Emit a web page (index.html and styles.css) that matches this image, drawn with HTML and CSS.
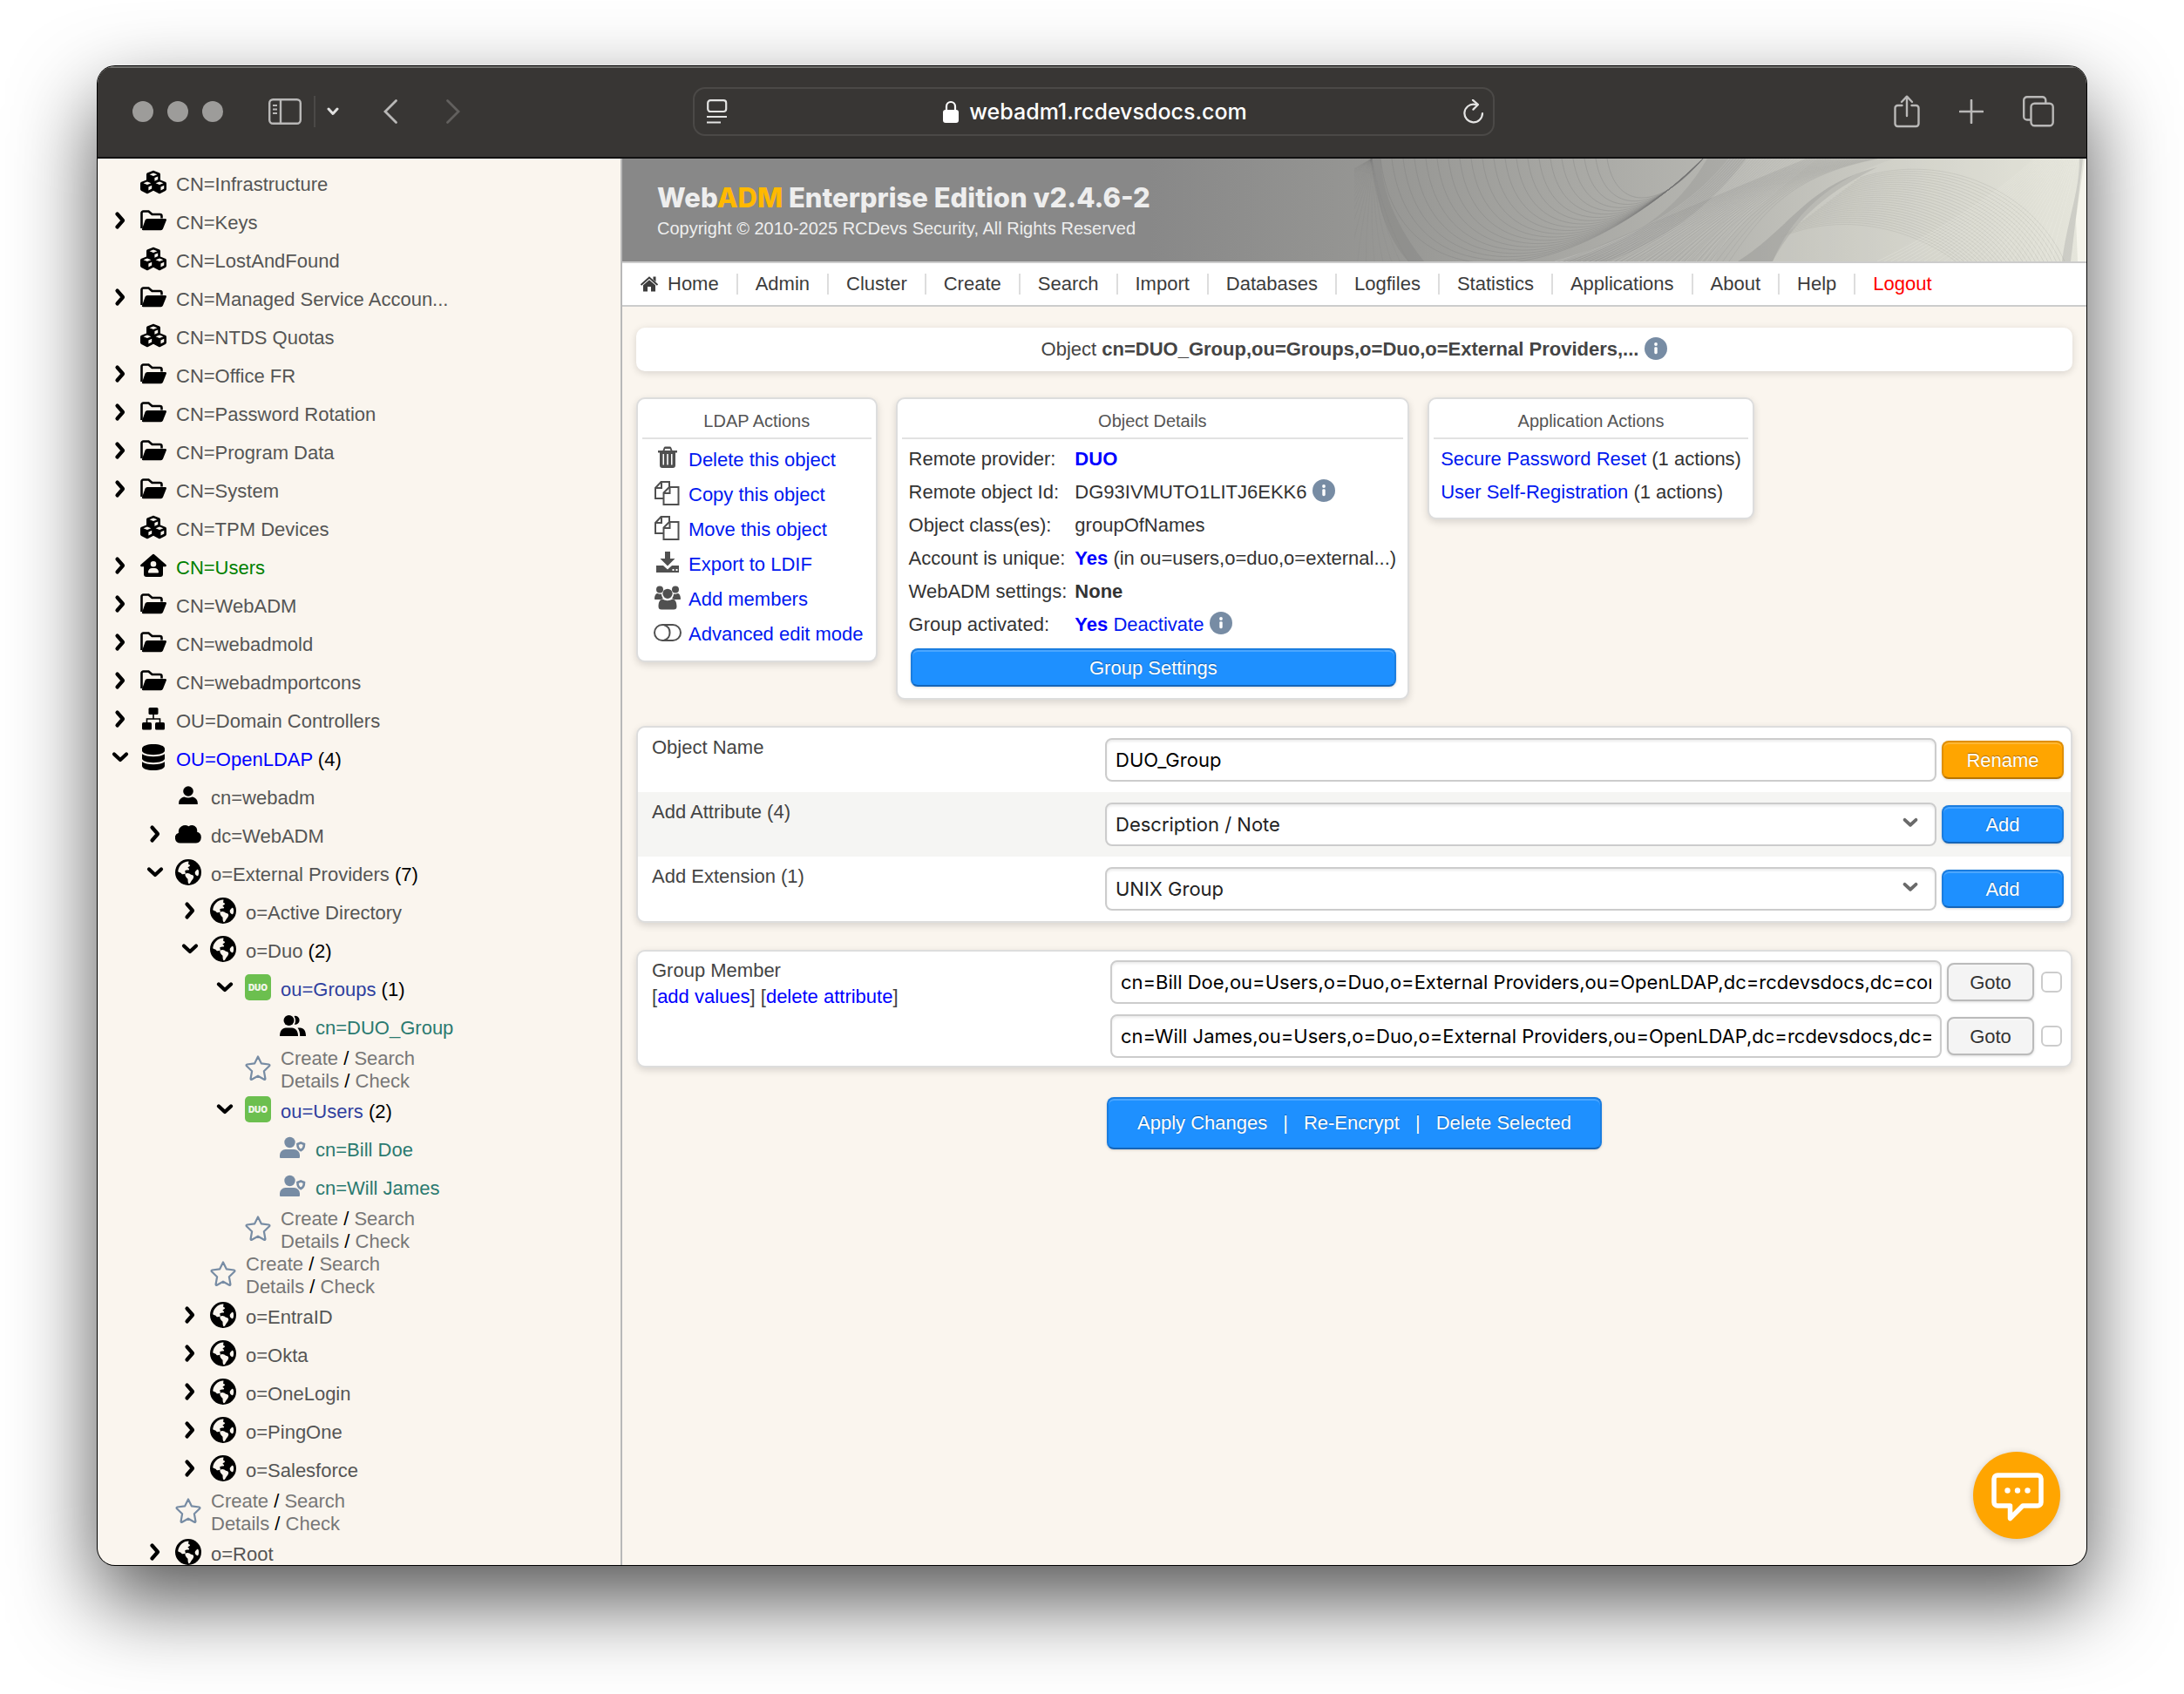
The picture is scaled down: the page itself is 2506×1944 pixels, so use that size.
FILE: index.html
```html
<!DOCTYPE html>
<html lang="en">
<head>
<meta charset="utf-8">
<title>WebADM Enterprise Edition</title>
<link rel="stylesheet" href="styles.css">
</head>
<body>
<svg class="sprite" aria-hidden="true">
  <symbol id="i-right" viewBox="0 0 24 24"><path d="M8.500 4.500L15 12l-6.500 7.500" fill="none" stroke="currentColor" stroke-width="4.200" stroke-linecap="round" stroke-linejoin="round"/></symbol>
  <symbol id="i-down" viewBox="0 0 24 24"><path d="M5 8.500l7 6.500 7-6.500" fill="none" stroke="currentColor" stroke-width="4.200" stroke-linecap="round" stroke-linejoin="round"/></symbol>
  <symbol id="i-cubes" viewBox="0 0 512 512"><path fill="currentColor" d="M488.600 250.200L392 214V105.500c0-15-9.300-28.400-23.400-33.700l-100-37.500c-8.100-3.100-17.100-3.100-25.300 0l-100 37.500c-14.100 5.300-23.400 18.700-23.400 33.700V214l-96.600 36.200C9.300 255.500 0 268.900 0 283.900V394c0 13.600 7.700 26.100 19.900 32.200l100 50c10.100 5.100 22.100 5.100 32.200 0l103.900-52 103.900 52c10.100 5.100 22.100 5.100 32.200 0l100-50c12.200-6.100 19.900-18.600 19.900-32.200V283.900c0-15-9.300-28.400-23.400-33.700zM345 205l-65 28v-62l65-28v62zM180 106l76-29 76 29v.6l-76 29-76-29v-.6zM225 385l-65 34v-68l65-30v64zm-13-108l-76 29-76-29v-.6l76-29 76 29v.6zm253 108l-65 34v-68l65-30v64zm-13-108l-76 29-76-29v-.6l76-29 76 29v.6z"/></symbol>
  <symbol id="i-folder" viewBox="0 0 30 30"><path d="M1.500 24V6.500a2 2 0 0 1 2-2h6l4 3.500h9a2 2 0 0 1 2 2v2.500" fill="none" stroke="currentColor" stroke-width="2.600"/><path fill="currentColor" d="M8 13h20.500a1.400 1.400 0 0 1 1.300 1.900l-3.800 9.700a2.600 2.600 0 0 1-2.400 1.600H3.300a1.300 1.300 0 0 1-1.200-1.800l3.500-9.800A2.600 2.600 0 0 1 8 13z"/></symbol>
  <symbol id="i-houseuser" viewBox="0 0 30 30"><path fill="currentColor" fill-rule="evenodd" d="M14 2.200a1.500 1.500 0 0 1 2 0L29.500 14c.9.900.3 2.200-.9 2.200H26V25a3 3 0 0 1-3 3H7a3 3 0 0 1-3-3v-8.800H1.400C.2 16.200-.4 14.900.5 14zM15 10a3.300 3.300 0 1 0 0 6.600A3.300 3.300 0 0 0 15 10zm-1.500 8A4.500 4.500 0 0 0 9 22.500c0 .6.400 1 1 1h10c.6 0 1-.4 1-1a4.500 4.500 0 0 0-4.500-4.500z"/></symbol>
  <symbol id="i-sitemap" viewBox="0 0 30 30"><g fill="currentColor"><rect x="9.500" y="2" width="11" height="8" rx="1.500"/><rect x="2" y="19" width="11" height="8.500" rx="1.500"/><rect x="17" y="19" width="11" height="8.500" rx="1.500"/></g><path d="M15 10v5M7.500 19v-4h15v4" fill="none" stroke="currentColor" stroke-width="1.600"/></symbol>
  <symbol id="i-db" viewBox="0 0 30 30"><path fill="currentColor" d="M15 0c7 0 13 2 13 5v2.500c0 2.700-6 4.700-13 4.700S2 10.200 2 7.500V5c0-3 6-5 13-5zM2 11.300c2.600 1.900 7.600 2.900 13 2.900s10.400-1 13-2.900v5.200c0 2.700-6 4.700-13 4.700s-13-2-13-4.700zM2 20.300c2.600 1.900 7.600 2.900 13 2.900s10.400-1 13-2.900V25c0 3-6 5-13 5S2 28 2 25z"/></symbol>
  <symbol id="i-user" viewBox="0 0 30 30"><g fill="currentColor"><circle cx="15" cy="10" r="5.800"/><path d="M4.200 25v-1.500C4.200 19.500 7 17 10.500 16.500q4.500 2 9 0c3.500.5 6.300 3 6.300 7V25z"/></g></symbol>
  <symbol id="i-cloud" viewBox="0 0 30 30"><path fill="currentColor" d="M6 25.500A6 6 0 0 1 4 13.800 7.500 7.500 0 0 1 15.500 6.300 6 6 0 0 1 25 12.600 6.600 6.600 0 0 1 24 25.500z"/></symbol>
  <symbol id="i-globe" viewBox="0 0 30 30"><circle cx="15" cy="15" r="15" fill="currentColor"/><g fill="#faf5ee"><path d="M15.500 2.600C9 2.600 4 7.600 3.200 14.200c2 1.300 3.800 1.200 4.300 2.800 1.300.7 3 .2 4.500-.4l-.8-3.200c1-1.200 3.200-.6 4.800-1.200.5-1.200-.4-1.900-1.600-2.300.6-1.600 2.400-1.300 2.700-2.900-.5-1-1.700-.7-2-1.600z"/><path d="M11.500 16.800c2.500-1.400 5-.6 6.500 1 2 .4 3.400 1 3.200 2.700-.5 2.500-2.400 3.500-3.200 5.500-.6 1.300-1.200 2.300-2.300 2.200-1.300-1-1-3.200-1.200-5.500-1.600-1.400-3.600-3.500-3-5.900z"/><path d="M25 12c1-.8 2 .2 2.100 3 0 2.500-.6 4.600-1.700 4.300-1.800-.7-2.800-2.300-2.700-4 .2-1.500 1.600-2 2.300-3.300z"/></g></symbol>
  <symbol id="i-users" viewBox="0 0 30 30"><g fill="currentColor"><circle cx="10.500" cy="9" r="6"/><path d="M0 27c0-6 3-9.500 7-9.500h7c4 0 7 3.500 7 9.500z"/><path d="M16.500 3.900a5 5 0 1 1 .3 9.800c1.700-2.700 1.700-6.800-.3-9.800zM20.500 17.500h3c4 0 6.500 3.500 6.500 9.500h-6.800c0-4-.8-7-2.700-9.500z"/></g></symbol>
  <symbol id="i-usershield" viewBox="0 0 30 30"><g fill="currentColor"><circle cx="11.500" cy="9" r="6.200"/><path d="M0 26v-2.500a6.500 6.500 0 0 1 6.500-6.500h10a6.500 6.500 0 0 1 6.500 6.500V26a1 1 0 0 1-1 1H1a1 1 0 0 1-1-1z"/></g><path d="M24.200 9.500l3.800 1.500c0 3.400-1.400 6-3.800 7.200-2.400-1.200-3.800-3.800-3.800-7.200z" fill="none" stroke="currentColor" stroke-width="2.600"/></symbol>
  <symbol id="i-star" viewBox="0 0 30 30"><path d="M15 2.400l3.800 7.900 8.700 1.200c.9.200 1.200 1 .6 1.700l-6.200 6 1.500 8.600c.1.900-.7 1.300-1.300 1L15 24.700l-7.100 4.100c-.6.300-1.400-.1-1.300-1l1.500-8.600-6.200-6c-.6-.7-.3-1.500.6-1.700l8.700-1.200z" fill="none" stroke="currentColor" stroke-width="2.200" stroke-linejoin="round"/></symbol>
  <symbol id="i-info" viewBox="0 0 26 26"><circle cx="13" cy="13" r="13" fill="#778ca4"/><circle cx="13" cy="8" r="1.900" fill="#fff"/><rect x="11.300" y="11.200" width="3.400" height="8" rx="1.400" fill="#fff"/></symbol>
  <symbol id="i-home" viewBox="0 0 22 20"><path d="M1.500 11L11 2.500l9.500 8.500" fill="none" stroke="currentColor" stroke-width="2"/><path fill="currentColor" d="M15.500 1.500h3v6l-3-2.800zM4 11.200l7-6 7 6V18.500h-5V13H9v5.500H4z"/></symbol>
  <symbol id="i-trash" viewBox="0 0 32 28"><path fill="currentColor" fill-rule="evenodd" d="M5 5h5.500l1.200-3.200A2 2 0 0 1 13.500.5h5a2 2 0 0 1 1.800 1.300L21.500 5H27v2.500h-2V22a3 3 0 0 1-3 3H10a3 3 0 0 1-3-3V7.500H5zm7.500 0h7l-.8-2h-5.400zM10.500 9v12.500H12V9zm4.700 0v12.500h1.600V9zM20 9v12.500h1.500V9z"/></symbol>
  <symbol id="i-copy" viewBox="0 0 32 28"><g fill="none" stroke="currentColor" stroke-width="2"><path d="M11.500 20H2V8l6.500-7H18v6M9 1.500V8H2.500M11.500 13.500L18 7h10.500v20h-17z"/><path d="M18.500 7.500V14H12"/></g></symbol>
  <symbol id="i-export" viewBox="0 0 32 28"><path fill="currentColor" fill-rule="evenodd" d="M13 1h6v8h5.500L16 17.500 7.500 9H13zM3 17h8l5 4.500 5-4.500h8v8H3zm18.500 4v2h2v-2zm4 0v2h2v-2z"/></symbol>
  <symbol id="i-group" viewBox="0 0 32 28"><g fill="currentColor"><circle cx="7" cy="4.500" r="4"/><circle cx="25" cy="4.500" r="4"/><circle cx="16" cy="9.300" r="5.600"/><path d="M1 15.500C1 11.500 2.500 9 4.500 9c1.500.8 3 .9 4.500.4.200 2 .6 3.500 1.800 5L8.500 16H3a2 2 0 0 1-2-.5zM31 15.500c0-4-1.500-6.500-3.500-6.500-1.500.8-3 .9-4.500.4-.2 2-.6 3.500-1.800 5l2.300 1.600H29a2 2 0 0 0 2-.5zM5.500 24c0-5 1.800-8.500 5-8.500 3.400 2.200 7.600 2.200 11 0 3.200 0 5 3.500 5 8.500a3.500 3.500 0 0 1-3.500 3.500H9A3.500 3.500 0 0 1 5.500 24z"/></g></symbol>
  <symbol id="i-toggle" viewBox="0 0 32 28"><g fill="none" stroke="currentColor" stroke-width="2"><rect x="1" y="5" width="30" height="18" rx="9"/><path d="M12 5.200a9.200 9.200 0 0 1 0 17.600"/></g></symbol>
</svg>

<div class="window">
  <header class="toolbar">
    <div class="toolbar-left">
      <span class="lights"><i></i><i></i><i></i></span>
      <button class="tool tool-sidebar" aria-label="Sidebar"><svg width="38" height="30" viewBox="0 0 38 30"><g fill="none" stroke="currentColor" stroke-width="2.400"><rect x="1.200" y="1.200" width="35.600" height="27.600" rx="4"/><path d="M14 1v28"/></g><path d="M5 8h5M5 12.500h5M5 17h5" stroke="currentColor" stroke-width="1.800"/></svg></button>
      <span class="tool-sep"></span>
      <button class="tool tool-menu" aria-label="Tab groups"><svg width="14" height="10" viewBox="0 0 14 10"><path d="M2 2l5 5.500L12 2" fill="none" stroke="currentColor" stroke-width="3" stroke-linecap="round" stroke-linejoin="round"/></svg></button>
      <button class="tool tool-back" aria-label="Back"><svg width="18" height="30" viewBox="0 0 18 30"><path d="M15.500 2.500L3 15l12.500 12.500" fill="none" stroke="currentColor" stroke-width="2.800" stroke-linecap="round"/></svg></button>
      <button class="tool tool-forward" aria-label="Forward"><svg width="18" height="30" viewBox="0 0 18 30"><path d="M2.500 2.500L15 15 2.500 27.500" fill="none" stroke="currentColor" stroke-width="2.800" stroke-linecap="round"/></svg></button>
    </div>
    <div class="address">
      <svg width="24" height="28" viewBox="0 0 24 28"><rect x="1.200" y="1.200" width="21" height="12.800" rx="3" fill="none" stroke="currentColor" stroke-width="2.200"/><path d="M0 20h23M0 26.500h16" stroke="currentColor" stroke-width="2.200"/></svg>
      <span class="address-text"><svg width="18" height="26" viewBox="0 0 18 26"><rect y="11" width="18" height="15" rx="3" fill="currentColor"/><path d="M4 12V7a5 5 0 0 1 10 0v5" fill="none" stroke="currentColor" stroke-width="2.200"/></svg>webadm1.rcdevsdocs.com</span>
      <button class="tool tool-reload" aria-label="Reload"><svg width="24" height="28" viewBox="0 0 24 28"><path d="M22 16a10.300 10.300 0 1 1-9-10.200h3.500M11 .8l6 5.200-5.600 5.600" fill="none" stroke="currentColor" stroke-width="2.200" stroke-linecap="round" stroke-linejoin="round"/></svg></button>
    </div>
    <div class="toolbar-right">
      <button class="tool" aria-label="Share"><svg width="30" height="38" viewBox="0 0 30 38"><path d="M9.500 12H4.500a3 3 0 0 0-3 3v18a3 3 0 0 0 3 3h21a3 3 0 0 0 3-3V15a3 3 0 0 0-3-3h-5M15 24V2M9 8l6-6.300L21 8" fill="none" stroke="currentColor" stroke-width="2.400" stroke-linecap="round" stroke-linejoin="round"/></svg></button>
      <button class="tool" aria-label="New tab"><svg width="28" height="28" viewBox="0 0 28 28"><path d="M14 1v26M1 14h26" fill="none" stroke="currentColor" stroke-width="2.600" stroke-linecap="round"/></svg></button>
      <button class="tool" aria-label="Tab overview"><svg width="36" height="36" viewBox="0 0 36 36"><g fill="none" stroke="currentColor" stroke-width="2.400"><path d="M9.500 27.500H5a3.800 3.800 0 0 1-3.800-3.800V5A3.800 3.800 0 0 1 5 1.200h17.500A3.800 3.800 0 0 1 26.300 5v3.500"/><rect x="9.500" y="8.700" width="25.200" height="25.600" rx="4"/></g></svg></button>
    </div>
  </header>

  <div class="frames">
    <nav class="sidebar" aria-label="Directory tree">
      <ul class="tree" id="tree">
        <li><div class="node"><span class="toggle"></span><svg class="icon"><use href="#i-cubes"/></svg><a href="#">CN=Infrastructure</a></div></li>
        <li><div class="node"><svg class="toggle"><use href="#i-right"/></svg><svg class="icon"><use href="#i-folder"/></svg><a href="#">CN=Keys</a></div></li>
        <li><div class="node"><span class="toggle"></span><svg class="icon"><use href="#i-cubes"/></svg><a href="#">CN=LostAndFound</a></div></li>
        <li><div class="node"><svg class="toggle"><use href="#i-right"/></svg><svg class="icon"><use href="#i-folder"/></svg><a href="#">CN=Managed Service Accoun...</a></div></li>
        <li><div class="node"><span class="toggle"></span><svg class="icon"><use href="#i-cubes"/></svg><a href="#">CN=NTDS Quotas</a></div></li>
        <li><div class="node"><svg class="toggle"><use href="#i-right"/></svg><svg class="icon"><use href="#i-folder"/></svg><a href="#">CN=Office FR</a></div></li>
        <li><div class="node"><svg class="toggle"><use href="#i-right"/></svg><svg class="icon"><use href="#i-folder"/></svg><a href="#">CN=Password Rotation</a></div></li>
        <li><div class="node"><svg class="toggle"><use href="#i-right"/></svg><svg class="icon"><use href="#i-folder"/></svg><a href="#">CN=Program Data</a></div></li>
        <li><div class="node"><svg class="toggle"><use href="#i-right"/></svg><svg class="icon"><use href="#i-folder"/></svg><a href="#">CN=System</a></div></li>
        <li><div class="node"><span class="toggle"></span><svg class="icon"><use href="#i-cubes"/></svg><a href="#">CN=TPM Devices</a></div></li>
        <li><div class="node"><svg class="toggle"><use href="#i-right"/></svg><svg class="icon"><use href="#i-houseuser"/></svg><a class="green" href="#">CN=Users</a></div></li>
        <li><div class="node"><svg class="toggle"><use href="#i-right"/></svg><svg class="icon"><use href="#i-folder"/></svg><a href="#">CN=WebADM</a></div></li>
        <li><div class="node"><svg class="toggle"><use href="#i-right"/></svg><svg class="icon"><use href="#i-folder"/></svg><a href="#">CN=webadmold</a></div></li>
        <li><div class="node"><svg class="toggle"><use href="#i-right"/></svg><svg class="icon"><use href="#i-folder"/></svg><a href="#">CN=webadmportcons</a></div></li>
        <li><div class="node"><svg class="toggle"><use href="#i-right"/></svg><svg class="icon"><use href="#i-sitemap"/></svg><a href="#">OU=Domain Controllers</a></div></li>
        <li><div class="node"><svg class="toggle"><use href="#i-down"/></svg><svg class="icon"><use href="#i-db"/></svg><span><a class="blue" href="#">OU=OpenLDAP</a> (4)</span></div>
          <ul>
            <li><div class="node"><span class="toggle"></span><svg class="icon"><use href="#i-user"/></svg><a href="#">cn=webadm</a></div></li>
            <li><div class="node"><svg class="toggle"><use href="#i-right"/></svg><svg class="icon"><use href="#i-cloud"/></svg><a href="#">dc=WebADM</a></div></li>
            <li><div class="node"><svg class="toggle"><use href="#i-down"/></svg><svg class="icon"><use href="#i-globe"/></svg><span><a href="#">o=External Providers</a> (7)</span></div>
              <ul>
                <li><div class="node"><svg class="toggle"><use href="#i-right"/></svg><svg class="icon"><use href="#i-globe"/></svg><a href="#">o=Active Directory</a></div></li>
                <li><div class="node"><svg class="toggle"><use href="#i-down"/></svg><svg class="icon"><use href="#i-globe"/></svg><span><a href="#">o=Duo</a> (2)</span></div>
                  <ul>
                    <li><div class="node"><svg class="toggle"><use href="#i-down"/></svg><span class="icon duo">DUO</span><span><a class="navy" href="#">ou=Groups</a> (1)</span></div>
                      <ul>
                        <li><div class="node"><span class="toggle"></span><svg class="icon"><use href="#i-users"/></svg><a class="teal" href="#">cn=DUO_Group</a></div></li>
                      </ul>
                      <div class="node node-actions"><span class="toggle"></span><svg class="icon"><use href="#i-star"/></svg><span><a href="#">Create</a> / <a href="#">Search</a><br><a href="#">Details</a> / <a href="#">Check</a></span></div>
                    </li>
                    <li><div class="node"><svg class="toggle"><use href="#i-down"/></svg><span class="icon duo">DUO</span><span><a class="navy" href="#">ou=Users</a> (2)</span></div>
                      <ul>
                        <li><div class="node"><span class="toggle"></span><svg class="icon slate"><use href="#i-usershield"/></svg><a class="teal" href="#">cn=Bill Doe</a></div></li>
                        <li><div class="node"><span class="toggle"></span><svg class="icon slate"><use href="#i-usershield"/></svg><a class="teal" href="#">cn=Will James</a></div></li>
                      </ul>
                      <div class="node node-actions"><span class="toggle"></span><svg class="icon"><use href="#i-star"/></svg><span><a href="#">Create</a> / <a href="#">Search</a><br><a href="#">Details</a> / <a href="#">Check</a></span></div>
                    </li>
                  </ul>
                  <div class="node node-actions"><span class="toggle"></span><svg class="icon"><use href="#i-star"/></svg><span><a href="#">Create</a> / <a href="#">Search</a><br><a href="#">Details</a> / <a href="#">Check</a></span></div>
                </li>
                <li><div class="node"><svg class="toggle"><use href="#i-right"/></svg><svg class="icon"><use href="#i-globe"/></svg><a href="#">o=EntraID</a></div></li>
                <li><div class="node"><svg class="toggle"><use href="#i-right"/></svg><svg class="icon"><use href="#i-globe"/></svg><a href="#">o=Okta</a></div></li>
                <li><div class="node"><svg class="toggle"><use href="#i-right"/></svg><svg class="icon"><use href="#i-globe"/></svg><a href="#">o=OneLogin</a></div></li>
                <li><div class="node"><svg class="toggle"><use href="#i-right"/></svg><svg class="icon"><use href="#i-globe"/></svg><a href="#">o=PingOne</a></div></li>
                <li><div class="node"><svg class="toggle"><use href="#i-right"/></svg><svg class="icon"><use href="#i-globe"/></svg><a href="#">o=Salesforce</a></div></li>
              </ul>
              <div class="node node-actions"><span class="toggle"></span><svg class="icon"><use href="#i-star"/></svg><span><a href="#">Create</a> / <a href="#">Search</a><br><a href="#">Details</a> / <a href="#">Check</a></span></div>
            </li>
            <li><div class="node"><svg class="toggle"><use href="#i-right"/></svg><svg class="icon"><use href="#i-globe"/></svg><a href="#">o=Root</a></div></li>
          </ul>
        </li>
      </ul>
    </nav>

    <main class="main">
      <div class="banner">
        <svg class="waves" id="waves" viewBox="0 0 840 118" preserveAspectRatio="xMaxYMid slice" aria-hidden="true"></svg>
        <h1>Web<b>ADM</b> Enterprise Edition v2.4.6-2</h1>
        <p>Copyright © 2010-2025 RCDevs Security, All Rights Reserved</p>
      </div>
      <nav class="menu">
        <a href="#"><svg width="22" height="20"><use href="#i-home"/></svg>Home</a>
        <a href="#">Admin</a>
        <a href="#">Cluster</a>
        <a href="#">Create</a>
        <a href="#">Search</a>
        <a href="#">Import</a>
        <a href="#">Databases</a>
        <a href="#">Logfiles</a>
        <a href="#">Statistics</a>
        <a href="#">Applications</a>
        <a href="#">About</a>
        <a href="#">Help</a>
        <a class="logout" href="#">Logout</a>
      </nav>

      <div class="content">
        <h2 class="object-bar"><span>Object <b>cn=DUO_Group,ou=Groups,o=Duo,o=External Providers,...</b></span><svg class="info"><use href="#i-info"/></svg></h2>

        <div class="cards">
          <section class="card">
            <h3>LDAP Actions</h3>
            <ul class="actions">
              <li><svg><use href="#i-trash"/></svg><a href="#">Delete this object</a></li>
              <li><svg><use href="#i-copy"/></svg><a href="#">Copy this object</a></li>
              <li><svg><use href="#i-copy"/></svg><a href="#">Move this object</a></li>
              <li><svg><use href="#i-export"/></svg><a href="#">Export to LDIF</a></li>
              <li><svg><use href="#i-group"/></svg><a href="#">Add members</a></li>
              <li><svg><use href="#i-toggle"/></svg><a href="#">Advanced edit mode</a></li>
            </ul>
          </section>
          <section class="card">
            <h3>Object Details</h3>
            <table class="details">
              <tr><th scope="row">Remote provider:</th><td><b class="em">DUO</b></td></tr>
              <tr><th scope="row">Remote object Id:</th><td>DG93IVMUTO1LITJ6EKK6 <svg class="info"><use href="#i-info"/></svg></td></tr>
              <tr><th scope="row">Object class(es):</th><td>groupOfNames</td></tr>
              <tr><th scope="row">Account is unique:</th><td><b class="em">Yes</b> (in ou=users,o=duo,o=external...)</td></tr>
              <tr><th scope="row">WebADM settings:</th><td><b>None</b></td></tr>
              <tr><th scope="row">Group activated:</th><td><b class="em">Yes</b> <a href="#">Deactivate</a> <svg class="info"><use href="#i-info"/></svg></td></tr>
            </table>
            <button class="btn btn-settings" type="button">Group Settings</button>
          </section>
          <section class="card">
            <h3>Application Actions</h3>
            <ul class="apps">
              <li><a href="#">Secure Password Reset</a> (1 actions)</li>
              <li><a href="#">User Self-Registration</a> (1 actions)</li>
            </ul>
          </section>
        </div>

        <form>
          <div class="panel">
            <div class="row">
              <label for="name">Object Name</label>
              <div class="control"><input class="field" id="name" type="text" value="DUO_Group"><button class="btn btn-orange" type="button">Rename</button></div>
            </div>
            <div class="row row-alt">
              <label for="attr">Add Attribute (4)</label>
              <div class="control"><span class="select"><select class="field" id="attr"><option>Description / Note</option></select><svg><use href="#i-down"/></svg></span><button class="btn" type="button">Add</button></div>
            </div>
            <div class="row">
              <label for="ext">Add Extension (1)</label>
              <div class="control"><span class="select"><select class="field" id="ext"><option>UNIX Group</option></select><svg><use href="#i-down"/></svg></span><button class="btn" type="button">Add</button></div>
            </div>
          </div>

          <div class="panel">
            <div class="row row-members">
              <div class="members-label"><label for="m1">Group Member</label><br>[<a href="#">add values</a>] [<a href="#">delete attribute</a>]</div>
              <div class="members">
                <div class="control"><input class="field" id="m1" type="text" value="cn=Bill Doe,ou=Users,o=Duo,o=External Providers,ou=OpenLDAP,dc=rcdevsdocs,dc=com"><button class="btn btn-plain" type="button">Goto</button><input class="check" type="checkbox" aria-label="Select Bill Doe"></div>
                <div class="control"><input class="field" type="text" aria-label="Group member 2" value="cn=Will James,ou=Users,o=Duo,o=External Providers,ou=OpenLDAP,dc=rcdevsdocs,dc=com"><button class="btn btn-plain" type="button">Goto</button><input class="check" type="checkbox" aria-label="Select Will James"></div>
              </div>
            </div>
          </div>

          <div class="submit">
            <button type="button">Apply Changes</button><span>|</span><button type="button">Re-Encrypt</button><span>|</span><button type="button">Delete Selected</button>
          </div>
        </form>
      </div>
    </main>
  </div>
  <button class="chat" type="button" aria-label="Chat"><svg width="60" height="56" viewBox="0 0 60 56"><path d="M7 3h46a4 4 0 0 1 4 4v27a4 4 0 0 1-4 4H36L21.500 52.500V38H7a4 4 0 0 1-4-4V7a4 4 0 0 1 4-4z" fill="none" stroke="#fff" stroke-width="5.500" stroke-linejoin="round"/><g fill="#fff"><circle cx="18.500" cy="20.500" r="3.200"/><circle cx="30" cy="20.500" r="3.200"/><circle cx="41.500" cy="20.500" r="3.200"/></g></svg></button>
</div>
<script src="waves.js"></script>
</body>
</html>
```

FILE: styles.css
```css
* {
  box-sizing: border-box;
}

body {
  margin: 0;
  padding: 76px 112px 148px;
  background: #fff;
  color: #000;
  font: 22px/30px "Liberation Sans", Arial, sans-serif;
}

ul {
  margin: 0;
  padding: 0;
  list-style: none;
}

a {
  color: #0018f0;
  text-decoration: none;
}

button {
  font: inherit;
  cursor: pointer;
}

.sprite {
  position: absolute;
  width: 0;
  height: 0;
}

/* Browser window */
.window {
  position: relative;
  display: flex;
  flex-direction: column;
  height: calc(100vh - 224px);
  overflow: hidden;
  border-radius: 20px;
  background: #faf5ee;
  box-shadow: 0 0 0 1px #000, 0 40px 96px rgba(0, 0, 0, 0.68);
}

.toolbar {
  flex: none;
  display: flex;
  align-items: center;
  height: 106px;
  padding: 0 37px 2px 40px;
  border-top: 2px solid #72726f;
  border-bottom: 2px solid #111;
  background: #383634;
  color: #b9b8b7;
}

.toolbar-left,
.toolbar-right {
  flex: 1 1 0;
  display: flex;
  align-items: center;
}

.toolbar-right {
  justify-content: flex-end;
  gap: 45px;
}

.lights {
  display: flex;
  gap: 16px;
}

.lights i {
  width: 24px;
  height: 24px;
  border-radius: 50%;
  background: #9d9c9a;
}

.tool {
  display: flex;
  padding: 0;
  border: 0;
  background: none;
  color: inherit;
}

.tool-sidebar {
  margin-left: 52px;
}

.tool-sep {
  width: 2px;
  height: 36px;
  margin: 0 13px 0 14px;
  background: #4b4947;
}

.tool-menu {
  color: #e0e0df;
}

.tool-back {
  margin: 0 54px 0 50px;
}

.tool-forward {
  color: #62605e;
}

.address {
  flex: 0 1 920px;
  display: flex;
  align-items: center;
  justify-content: space-between;
  height: 56px;
  padding: 0 10px 0 14px;
  border: 2px solid #4b4947;
  border-radius: 14px;
  color: #e4e4e3;
}

.address-text {
  display: flex;
  align-items: center;
  gap: 12px;
  color: #fff;
  font: 500 25px/32px Inter, sans-serif;
}

.frames {
  flex: 1;
  display: flex;
  min-height: 0;
}

/* Directory tree */
.sidebar {
  flex: 0 0 602px;
  overflow: hidden;
  padding: 8px 0 0 14px;
  border-right: 2px solid #b8b8b8;
}

.tree ul {
  padding-left: 40px;
}

.node {
  display: flex;
  align-items: center;
  gap: 11px;
  height: 44px;
  white-space: nowrap;
}

.node a {
  color: #555;
}

.node svg,
.duo {
  margin-bottom: 6px;
}

.toggle {
  flex: none;
  width: 24px;
  height: 24px;
}

.icon {
  flex: none;
  width: 30px;
  height: 30px;
}

.duo {
  border-radius: 5px;
  background: #6cbf4f;
  color: #f1f6ea;
  font: 900 10px/30px Inter, sans-serif;
  text-align: center;
}

.node-actions {
  height: 52px;
  line-height: 26px;
}

.node-actions a {
  color: #777;
}

.node-actions .icon,
.slate {
  color: #778ca4;
}

.node .green {
  color: #008000;
}

.node .blue {
  color: #00f;
}

.node .navy {
  color: #2f3f9e;
}

.node .teal {
  color: #2b7a70;
}

/* Main frame */
.main {
  flex: 1;
  min-width: 0;
  overflow: hidden;
}

.banner {
  position: relative;
  height: 120px;
  padding: 26px 40px;
  border-bottom: 2px solid #ccc;
  background: linear-gradient(90deg, #888 36%, #999996 54%, #b6b6b1 75%, #deded4 96%, #e6e6dc);
  color: #eee;
}

.waves {
  position: absolute;
  top: 0;
  right: 0;
  width: 50%;
  height: 100%;
}

.banner h1 {
  margin: 0;
  font: 800 31px/38px Inter, sans-serif;
}

.banner h1 b {
  color: #ffb900;
  font-weight: inherit;
}

.banner p {
  margin: 0;
  font-size: 20px;
  line-height: 32px;
}

.menu {
  display: flex;
  align-items: center;
  height: 50px;
  border-bottom: 2px solid #ccc;
  background: #fff;
}

.menu a {
  display: flex;
  align-items: center;
  gap: 10px;
  padding: 0 20px;
  border-right: 2px solid #ddd;
  color: #3c3c3c;
  line-height: 24px;
}

.menu .logout {
  border: 0;
  color: #f00;
}

.content {
  padding: 24px 16px;
}

.object-bar {
  display: flex;
  align-items: center;
  justify-content: center;
  gap: 7px;
  height: 50px;
  margin: 0 0 30px;
  border-radius: 10px;
  background: #fff;
  box-shadow: 0 2px 8px rgba(0, 0, 0, 0.14);
  color: #444;
  font-size: 22px;
  font-weight: 400;
}

.object-bar .info {
  margin-bottom: 2px;
}

.info {
  width: 26px;
  height: 26px;
  vertical-align: -4px;
}

.cards {
  display: flex;
  align-items: flex-start;
  gap: 21px;
  margin-bottom: 30px;
}

.card,
.panel {
  border: 2px solid #ddd;
  border-radius: 10px;
  background: #fff;
  box-shadow: 0 3px 8px rgba(0, 0, 0, 0.14);
}

.card {
  padding: 0 5px 10px;
  color: #333;
}

.card h3 {
  margin: 0 0 4px;
  padding: 10px 0 4px;
  border-bottom: 2px solid #e2e2e2;
  color: #555;
  font-size: 20px;
  font-weight: 400;
  text-align: center;
}

.actions li {
  display: flex;
  align-items: center;
  gap: 8px;
  height: 40px;
  padding: 0 9px 0 13px;
}

.actions svg {
  width: 32px;
  height: 28px;
  margin-bottom: 4px;
  color: #505050;
}

.details {
  border-collapse: collapse;
}

.details th,
.details td {
  height: 38px;
  padding: 0 8px;
  font-weight: 400;
  text-align: left;
  white-space: nowrap;
}

.details th {
  padding-right: 1px;
}

.em {
  color: #00f;
}

.apps li {
  height: 38px;
  padding: 0 8px;
  line-height: 38px;
}

.btn {
  flex: none;
  width: 140px;
  height: 44px;
  padding: 2px 0 0;
  border: 2px solid #1a7de0;
  border-bottom-color: #1565b8;
  border-radius: 8px;
  background: #1e90ff;
  box-shadow: inset 0 2px 0 rgba(255, 255, 255, 0.2), 0 1px 3px rgba(0, 0, 0, 0.15);
  color: #fff;
  text-shadow: 0 -1px 1px rgba(0, 0, 0, 0.35);
}

.btn-settings {
  display: block;
  width: auto;
  width: -webkit-fill-available;
  margin: 8px 8px 3px 10px;
}

.btn-orange {
  border-color: #e08f00;
  border-bottom-color: #b87400;
  background: #ffa500;
}

.btn-plain {
  width: 100px;
  border-color: #bbb;
  background: #f4f4f4;
  color: #333;
  text-shadow: 0 1px 1px #fff;
}

.panel {
  margin-bottom: 31px;
  overflow: hidden;
}

.row {
  display: grid;
  grid-template-columns: 26fr 55fr;
  padding: 12px 8px 12px 16px;
  color: #444;
}

.row > label {
  line-height: 22px;
}

.row-alt {
  background: #f5f5f3;
}

.control {
  display: flex;
  align-items: center;
  gap: 6px;
  min-width: 0;
}

.field {
  flex: 1;
  min-width: 0;
  width: 100%;
  height: 50px;
  padding: 0 10px;
  border: 2px solid #ccc;
  border-radius: 8px;
  background: #fff;
  box-shadow: inset 0 2px 3px rgba(0, 0, 0, 0.08);
  color: #000;
  font: 22px Inter, sans-serif;
  appearance: none;
}

.select {
  position: relative;
  display: flex;
  flex: 1;
  min-width: 0;
}

.select .field {
  color: #222;
}

.select svg {
  position: absolute;
  top: 12px;
  right: 19px;
  width: 22px;
  height: 22px;
  color: #6a6a6a;
}

.row-members {
  grid-template-columns: 263fr 546fr;
  padding: 7px 10px 9px 16px;
}

.members-label {
  line-height: 30px;
}

.members-label a {
  color: #00f;
}

.members {
  display: flex;
  flex-direction: column;
  gap: 12px;
  min-width: 0;
  padding-top: 3px;
}

.check {
  flex: none;
  width: 24px;
  height: 24px;
  margin: 0 0 0 2px;
  border: 2px solid #ccc;
  border-radius: 6px;
  background: #fff;
  appearance: none;
}

.submit {
  display: flex;
  align-items: center;
  justify-content: center;
  gap: 18px;
  width: 568px;
  height: 60px;
  margin: 34px auto 0;
  border: 2px solid #1a7de0;
  border-bottom-color: #1565b8;
  border-radius: 8px;
  background: #1e90ff;
  box-shadow: inset 0 2px 0 rgba(255, 255, 255, 0.2), 0 1px 3px rgba(0, 0, 0, 0.15);
  color: #fff;
  text-shadow: 0 -1px 1px rgba(0, 0, 0, 0.35);
}

.submit button {
  padding: 0;
  border: 0;
  background: none;
  color: inherit;
  text-shadow: inherit;
}

.chat {
  position: absolute;
  right: 30px;
  bottom: 30px;
  display: flex;
  align-items: center;
  justify-content: center;
  width: 100px;
  height: 100px;
  padding: 4px 0 0 2px;
  border: 0;
  border-radius: 50%;
  background: #ffa500;
  box-shadow: 0 2px 8px rgba(0, 0, 0, 0.2);
}
```

FILE: waves.js
```javascript
// Line-art of the banner: each family blends from one cubic curve to another.
(function () {
  var svg = document.getElementById("waves");
  var ns = "http://www.w3.org/2000/svg";

  function add(d, attrs) {
    var p = document.createElementNS(ns, "path");
    p.setAttribute("d", d);
    for (var k in attrs) p.setAttribute(k, attrs[k]);
    svg.appendChild(p);
  }

  function family(a, b, count, color, opacity) {
    for (var i = 0; i <= count; i++) {
      var t = i / count;
      var c = a.map(function (v, j) { return (v + (b[j] - v) * t).toFixed(1); });
      add("M" + c[0] + " " + c[1] + "C" + c.slice(2).join(" "),
        { fill: "none", stroke: color, "stroke-width": 1, "stroke-opacity": opacity });
    }
  }

  // soft shaded areas
  add("M18 0C26 50 36 90 62 118H80C50 80 32 40 30 0z", { fill: "#777", "fill-opacity": 0.25 });
  add("M405 0C370 60 320 95 240 118H290C370 90 420 40 450 0z", { fill: "#808080", "fill-opacity": 0.22 });
  add("M440 118C500 80 520 30 600 10C560 30 510 60 480 118z", { fill: "#808080", "fill-opacity": 0.3 });
  add("M480 118C500 70 540 25 620 0H832L815 118z", { fill: "#e8e8de", "fill-opacity": 0.2 });
  add("M836 0L822 118H812C818 70 832 40 832 0z", { fill: "#999", "fill-opacity": 0.3 });
  add("M838 0L828 70L830 118H840V0z", { fill: "#fffdf5", "fill-opacity": 0.6 });

  // fine lines
  family([30, 0, 50, 170, 250, 150, 400, 0], [290, 0, 300, 60, 350, 60, 400, 0], 20, "#777", 0.28);
  family([-190, 118, -100, 60, -30, 30, 20, 0], [62, 118, 40, 80, 30, 50, 20, 0], 26, "#7a7a78", 0.12);
  family([230, 118, 330, 90, 390, 50, 430, 0], [410, 118, 440, 70, 480, 40, 530, 0], 30, "#d8d8d4", 0.28);
  family([240, 118, 330, 80, 420, 40, 520, 0], [430, 118, 470, 60, 500, 20, 600, 0], 26, "#808080", 0.18);
  family([490, 90, 560, 60, 640, 80, 690, 118], [580, 22, 680, -10, 780, 40, 815, 118], 26, "#a5a59d", 0.28);
  family([600, 118, 660, 90, 740, 40, 780, 0], [800, 118, 805, 90, 820, 40, 830, 0], 26, "#f4f4ea", 0.25);
})();
```
